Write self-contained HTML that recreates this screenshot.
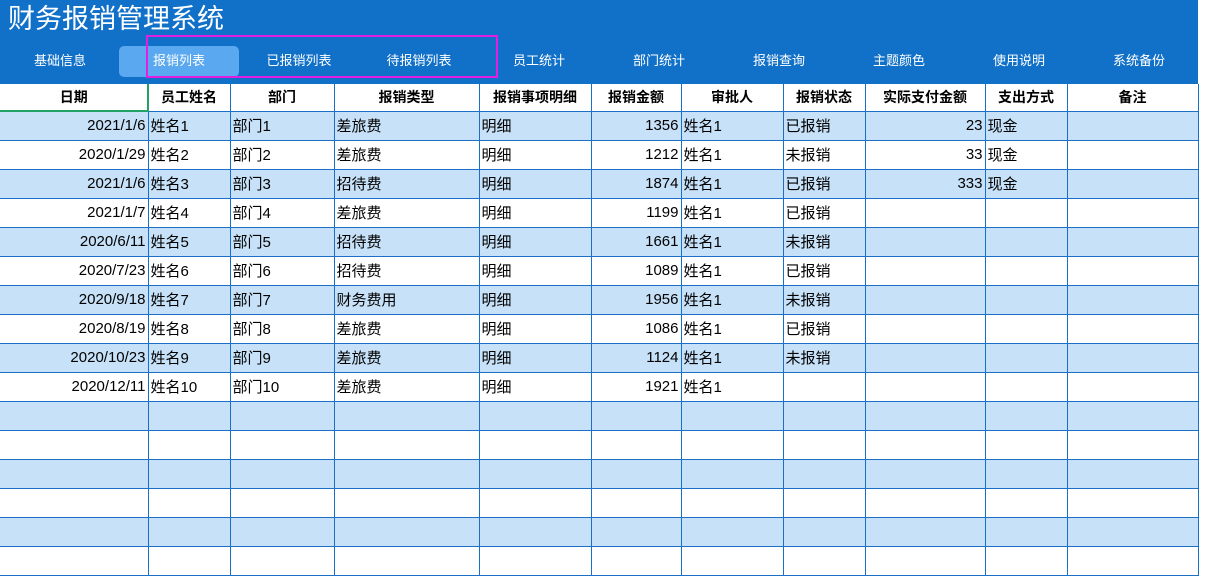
<!DOCTYPE html>
<html><head><meta charset="utf-8"><style>
*{margin:0;padding:0;box-sizing:border-box}
body{width:1207px;height:558px;overflow:hidden;background:#fff;font-family:"Liberation Sans","Noto Sans CJK SC",sans-serif;position:relative}
.hdr{position:absolute;left:0;top:0;width:1198px;height:84px;background:#1170c8}
.title{position:absolute;left:8px;top:1px;color:#fff;font-size:27px;line-height:36px}
.nav{position:absolute;top:50px;width:120px;text-align:center;color:#fff;font-size:13px;line-height:22px}
.pill{position:absolute;left:119px;top:46px;width:120px;height:31px;background:#5aa8ef;border-radius:5px}
.mag{position:absolute;left:146px;top:35px;width:352px;height:43px;border:2px solid #e31ee3}
table{position:absolute;left:0;top:84px;border-collapse:collapse;table-layout:fixed;font-size:15px}
td,th{border:1px solid #1a6fc6;height:29px;padding:0 2px;white-space:nowrap;overflow:hidden;color:#000}
th{height:27px;font-weight:bold;font-size:14px;text-align:center;border-top:none}
tr.b td{background:#c6e1f8}
td.r{text-align:right}
tr td:first-child,tr th:first-child{border-left:none}
.sel{position:absolute;left:0;top:84px;width:149px;height:28px;border:2px solid #21a366;border-top:none;border-left:none}
</style></head><body>
<div class="hdr"></div>
<div class="title">财务报销管理系统</div>
<div class="pill"></div>
<div class="nav" style="left:0">基础信息</div>
<div class="nav" style="left:119px">报销列表</div>
<div class="nav" style="left:239px">已报销列表</div>
<div class="nav" style="left:359px">待报销列表</div>
<div class="nav" style="left:479px">员工统计</div>
<div class="nav" style="left:599px">部门统计</div>
<div class="nav" style="left:719px">报销查询</div>
<div class="nav" style="left:839px">主题颜色</div>
<div class="nav" style="left:959px">使用说明</div>
<div class="nav" style="left:1079px">系统备份</div>
<div class="mag"></div>
<table>
<colgroup><col style="width:148px"><col style="width:82px"><col style="width:104px"><col style="width:145px"><col style="width:112px"><col style="width:90px"><col style="width:102px"><col style="width:82px"><col style="width:120px"><col style="width:82px"><col style="width:131px"></colgroup>
<tr><th>日期</th><th>员工姓名</th><th>部门</th><th>报销类型</th><th>报销事项明细</th><th>报销金额</th><th>审批人</th><th>报销状态</th><th>实际支付金额</th><th>支出方式</th><th>备注</th></tr>
<tr class="b"><td class="r">2021/1/6</td><td>姓名1</td><td>部门1</td><td>差旅费</td><td>明细</td><td class="r">1356</td><td>姓名1</td><td>已报销</td><td class="r">23</td><td>现金</td><td></td></tr>
<tr><td class="r">2020/1/29</td><td>姓名2</td><td>部门2</td><td>差旅费</td><td>明细</td><td class="r">1212</td><td>姓名1</td><td>未报销</td><td class="r">33</td><td>现金</td><td></td></tr>
<tr class="b"><td class="r">2021/1/6</td><td>姓名3</td><td>部门3</td><td>招待费</td><td>明细</td><td class="r">1874</td><td>姓名1</td><td>已报销</td><td class="r">333</td><td>现金</td><td></td></tr>
<tr><td class="r">2021/1/7</td><td>姓名4</td><td>部门4</td><td>差旅费</td><td>明细</td><td class="r">1199</td><td>姓名1</td><td>已报销</td><td></td><td></td><td></td></tr>
<tr class="b"><td class="r">2020/6/11</td><td>姓名5</td><td>部门5</td><td>招待费</td><td>明细</td><td class="r">1661</td><td>姓名1</td><td>未报销</td><td></td><td></td><td></td></tr>
<tr><td class="r">2020/7/23</td><td>姓名6</td><td>部门6</td><td>招待费</td><td>明细</td><td class="r">1089</td><td>姓名1</td><td>已报销</td><td></td><td></td><td></td></tr>
<tr class="b"><td class="r">2020/9/18</td><td>姓名7</td><td>部门7</td><td>财务费用</td><td>明细</td><td class="r">1956</td><td>姓名1</td><td>未报销</td><td></td><td></td><td></td></tr>
<tr><td class="r">2020/8/19</td><td>姓名8</td><td>部门8</td><td>差旅费</td><td>明细</td><td class="r">1086</td><td>姓名1</td><td>已报销</td><td></td><td></td><td></td></tr>
<tr class="b"><td class="r">2020/10/23</td><td>姓名9</td><td>部门9</td><td>差旅费</td><td>明细</td><td class="r">1124</td><td>姓名1</td><td>未报销</td><td></td><td></td><td></td></tr>
<tr><td class="r">2020/12/11</td><td>姓名10</td><td>部门10</td><td>差旅费</td><td>明细</td><td class="r">1921</td><td>姓名1</td><td></td><td></td><td></td><td></td></tr>
<tr class="b"><td></td><td></td><td></td><td></td><td></td><td></td><td></td><td></td><td></td><td></td><td></td></tr>
<tr><td></td><td></td><td></td><td></td><td></td><td></td><td></td><td></td><td></td><td></td><td></td></tr>
<tr class="b"><td></td><td></td><td></td><td></td><td></td><td></td><td></td><td></td><td></td><td></td><td></td></tr>
<tr><td></td><td></td><td></td><td></td><td></td><td></td><td></td><td></td><td></td><td></td><td></td></tr>
<tr class="b"><td></td><td></td><td></td><td></td><td></td><td></td><td></td><td></td><td></td><td></td><td></td></tr>
<tr><td></td><td></td><td></td><td></td><td></td><td></td><td></td><td></td><td></td><td></td><td></td></tr>
</table>
<div class="sel"></div>
</body></html>
